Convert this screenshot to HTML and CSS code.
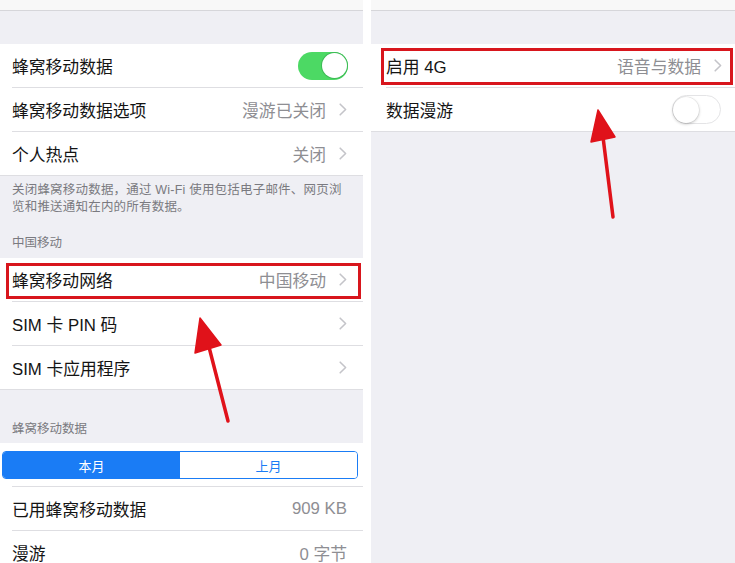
FILE: index.html
```html
<!DOCTYPE html>
<html lang="zh-CN">
<head>
<meta charset="utf-8">
<title>蜂窝移动数据</title>
<link rel="stylesheet" href="styles.css">
</head>
<body>
<div class="screen">
  <section class="panel panel-left">
    <div class="nav"></div>
    <div class="spacer"></div>
    <div class="group">
      <div class="row"><span class="label">蜂窝移动数据</span><span class="switch on"><span class="knob"></span></span></div>
      <div class="row"><span class="label">蜂窝移动数据选项</span><span class="value">漫游已关闭</span><svg class="chev" viewBox="0 0 8 13"><polyline points="1.2,1.2 6.6,6.5 1.2,11.8"/></svg></div>
      <div class="row last"><span class="label">个人热点</span><span class="value">关闭</span><svg class="chev" viewBox="0 0 8 13"><polyline points="1.2,1.2 6.6,6.5 1.2,11.8"/></svg></div>
    </div>
    <div class="footer">
      <p class="note">关闭蜂窝移动数据，通过 Wi-Fi 使用包括电子邮件、网页浏<br>览和推送通知在内的所有数据。</p>
      <p class="head head-first">中国移动</p>
    </div>
    <div class="group">
      <div class="row marked"><span class="label">蜂窝移动网络</span><span class="value">中国移动</span><svg class="chev" viewBox="0 0 8 13"><polyline points="1.2,1.2 6.6,6.5 1.2,11.8"/></svg></div>
      <div class="row"><span class="label">SIM 卡 PIN 码</span><svg class="chev" viewBox="0 0 8 13"><polyline points="1.2,1.2 6.6,6.5 1.2,11.8"/></svg></div>
      <div class="row last"><span class="label">SIM 卡应用程序</span><svg class="chev" viewBox="0 0 8 13"><polyline points="1.2,1.2 6.6,6.5 1.2,11.8"/></svg></div>
    </div>
    <div class="section-head"><p class="head">蜂窝移动数据</p></div>
    <div class="group">
      <div class="seg-wrap">
        <div class="seg"><span class="seg-item active">本月</span><span class="seg-item">上月</span></div>
      </div>
      <div class="row"><span class="label">已用蜂窝移动数据</span><span class="value plain">909 KB</span></div>
      <div class="row"><span class="label">漫游</span><span class="value plain">0 字节</span></div>
    </div>
  </section>

  <section class="panel panel-right">
    <div class="nav"></div>
    <div class="spacer"></div>
    <div class="group">
      <div class="row marked"><span class="label">启用 4G</span><span class="value">语音与数据</span><svg class="chev" viewBox="0 0 8 13"><polyline points="1.2,1.2 6.6,6.5 1.2,11.8"/></svg></div>
      <div class="row last"><span class="label">数据漫游</span><span class="switch off"><span class="knob"></span></span></div>
    </div>
    <div class="rest"></div>
  </section>

  <svg class="arrows" viewBox="0 0 735 563">
    <line x1="209" y1="347" x2="228" y2="421"/>
    <polygon points="200,318 195,353 221,345"/>
    <line x1="603" y1="137" x2="613" y2="217"/>
    <polygon points="598,110 591,142 615,137"/>
  </svg>
</div>
</body>
</html>
```

FILE: styles.css
```css
* { box-sizing: border-box; }

html, body {
  margin: 0;
  padding: 0;
  background: #ffffff;
}

body {
  font-family: "Liberation Sans", "Noto Sans CJK SC", sans-serif;
  color: #141414;
}

.screen {
  position: relative;
  width: 735px;
  height: 563px;
  display: flex;
  gap: 8px;
  overflow: hidden;
}

.panel {
  display: flex;
  flex-direction: column;
  background: #efeff4;
  height: 563px;
  overflow: hidden;
}

.panel-left { width: 363px; }
.panel-right { flex: 1; }

.nav {
  height: 11px;
  flex: none;
  background: #f8f8f8;
  border-bottom: 1px solid #d6d6da;
}

.spacer {
  height: 33px;
  flex: none;
}

.group {
  background: #ffffff;
  flex: none;
}

.row {
  position: relative;
  height: 44px;
  display: flex;
  align-items: center;
  padding: 0 16px 1px 12px;
  background: linear-gradient(#dedee2, #dedee2) no-repeat 12px 100% / calc(100% - 12px) 1px;
}

.panel-right .row {
  padding: 0 13px 1px 15px;
  background-position: 15px 100%;
  background-size: calc(100% - 15px) 1px;
}

.row.last {
  background: linear-gradient(#dedee2, #dedee2) no-repeat 0 100% / 100% 1px;
}

.panel-right .row.last {
  background: linear-gradient(#dedee2, #dedee2) no-repeat 0 100% / 100% 1px;
}

.label {
  font-size: 16.8px;
  flex: 1;
  white-space: nowrap;
}

.value {
  font-size: 16.8px;
  color: #8e8e93;
  white-space: nowrap;
}

.value.plain { margin-right: 0; }

.chev {
  width: 8px;
  height: 13px;
  margin-left: 13px;
  flex: none;
}

.chev polyline {
  fill: none;
  stroke: #c4c4c9;
  stroke-width: 1.6;
  stroke-linecap: round;
  stroke-linejoin: round;
}

.switch {
  display: flex;
  align-items: center;
  flex: none;
  border-radius: 16px;
}

.switch.on {
  width: 50px;
  height: 28px;
  background: #4cd964;
  justify-content: flex-end;
  padding: 1.5px;
  margin-right: -1px;
}

.switch.off {
  width: 49px;
  height: 29px;
  background: #ffffff;
  border: 1.5px solid #e4e4e6;
  justify-content: flex-start;
  margin-right: 1px;
}

.knob {
  width: 25px;
  height: 25px;
  border-radius: 50%;
  background: #ffffff;
}

.switch.on .knob {
  box-shadow: 0 0 0 1px #3dbb55;
}

.switch.off .knob {
  width: 26px;
  height: 26px;
  box-shadow: 0 1px 3px rgba(0, 0, 0, 0.25), 0 0 0 0.5px rgba(0, 0, 0, 0.08);
}

.marked::before {
  content: "";
  position: absolute;
  top: 5px;
  left: 6px;
  right: 2px;
  bottom: 3px;
  border: 3px solid #d8161d;
  pointer-events: none;
}

.panel-right .marked::before {
  top: 4px;
  left: 10px;
  right: 2px;
  bottom: 3px;
}

.footer {
  height: 82px;
  flex: none;
  padding: 6px 12px 0;
}

.note {
  margin: 0;
  font-size: 12.5px;
  line-height: 17px;
  color: #7a7a80;
  letter-spacing: 0.2px;
}

.head {
  margin: 0;
  font-size: 12.5px;
  line-height: 17px;
  color: #7a7a80;
}

.head-first { margin-top: 19px; }

.section-head {
  height: 53px;
  flex: none;
  padding: 31px 12px 0;
}

.seg-wrap {
  height: 44px;
  padding: 8px 5px 8px 2px;
  background: linear-gradient(#dedee2, #dedee2) no-repeat 12px 100% / calc(100% - 12px) 1px;
}

.seg {
  display: flex;
  height: 28px;
  border: 1px solid #1a7cf5;
  border-radius: 4px;
  overflow: hidden;
}

.seg-item {
  flex: 1;
  display: flex;
  align-items: center;
  justify-content: center;
  font-size: 13px;
  color: #1a7cf5;
  background: #ffffff;
}

.seg-item.active {
  background: #1a7cf5;
  color: #ffffff;
}

.rest { flex: 1; }

.arrows {
  position: absolute;
  left: 0;
  top: 0;
  width: 735px;
  height: 563px;
  pointer-events: none;
}

.arrows line {
  stroke: #e0121a;
  stroke-width: 3.5;
  stroke-linecap: round;
}

.arrows polygon {
  fill: #e0121a;
  stroke: #e0121a;
  stroke-width: 1.5;
  stroke-linejoin: round;
}
```
